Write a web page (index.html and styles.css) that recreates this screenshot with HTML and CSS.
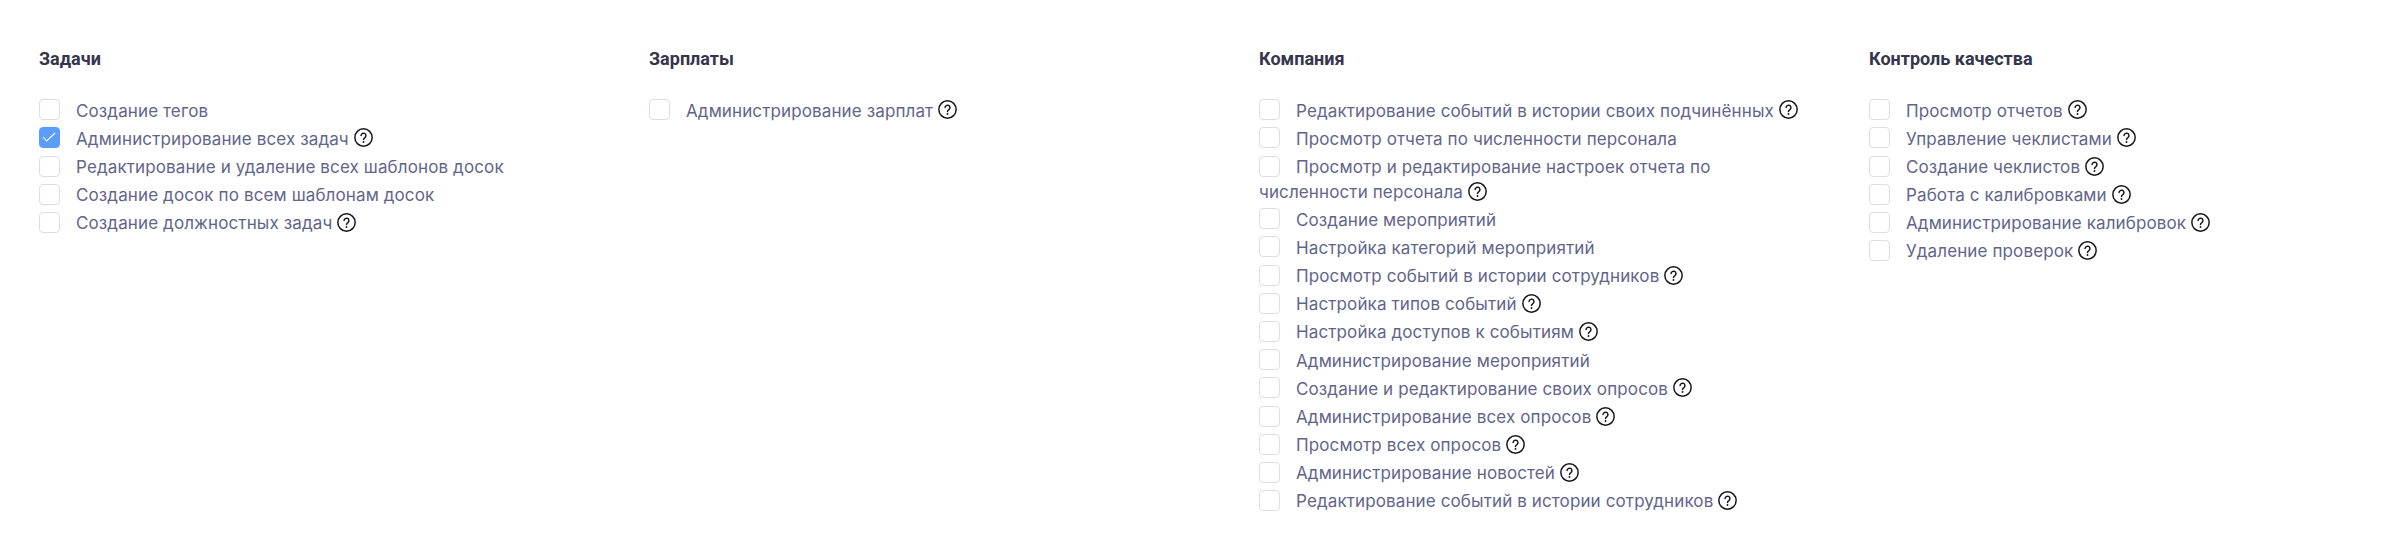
FILE: index.html
```html
<!DOCTYPE html>
<html lang="ru">
<head>
  <meta charset="UTF-8">
  <meta name="viewport" content="width=device-width, initial-scale=1.0">
  <title>Права доступа</title>
  <link rel="stylesheet" href="styles.css">
</head>
<body>
  <svg class="sprite" width="0" height="0">
    <symbol id="help" viewBox="0 0 18 18">
      <circle cx="9" cy="9" r="8.2" fill="none" stroke="#15151c" stroke-width="1.4"/>
      <path d="M6.7 7.2a2.3 2.3 0 1 1 3.6 1.9c-.8.5-1.3 1-1.3 1.9" fill="none" stroke="#15151c" stroke-width="1.4" stroke-linecap="round"/>
      <circle cx="9" cy="13.2" r=".9" fill="#15151c"/>
    </symbol>
  </svg>

  <div class="columns">
    <!-- Задачи -->
    <section class="group">
      <h3 class="group-title">Задачи</h3>
      <label class="item"><span class="box"></span><span class="item-text">Создание тегов</span></label>
      <label class="item"><span class="box box-checked"><svg viewBox="0 0 21 21"><path d="M4 10l3.7 4L16 6" fill="none" stroke="#fff" stroke-width="1.1"/></svg></span><span class="item-text">Администрирование всех задач</span><svg class="help"><use href="#help"/></svg></label>
      <label class="item"><span class="box"></span><span class="item-text">Редактирование и удаление всех шаблонов досок</span></label>
      <label class="item"><span class="box"></span><span class="item-text">Создание досок по всем шаблонам досок</span></label>
      <label class="item"><span class="box"></span><span class="item-text">Создание должностных задач</span><svg class="help"><use href="#help"/></svg></label>
    </section>

    <!-- Зарплаты -->
    <section class="group">
      <h3 class="group-title">Зарплаты</h3>
      <label class="item"><span class="box"></span><span class="item-text">Администрирование зарплат</span><svg class="help"><use href="#help"/></svg></label>
    </section>

    <!-- Компания -->
    <section class="group">
      <h3 class="group-title">Компания</h3>
      <label class="item"><span class="box"></span><span class="item-text">Редактирование событий в истории своих подчинённых</span><svg class="help"><use href="#help"/></svg></label>
      <label class="item"><span class="box"></span><span class="item-text">Просмотр отчета по численности персонала</span></label>
      <label class="item"><span class="box"></span><span class="item-text">Просмотр и редактирование настроек отчета по численности персонала</span><svg class="help"><use href="#help"/></svg></label>
      <label class="item"><span class="box"></span><span class="item-text">Создание мероприятий</span></label>
      <label class="item"><span class="box"></span><span class="item-text">Настройка категорий мероприятий</span></label>
      <label class="item"><span class="box"></span><span class="item-text">Просмотр событий в истории сотрудников</span><svg class="help"><use href="#help"/></svg></label>
      <label class="item"><span class="box"></span><span class="item-text">Настройка типов событий</span><svg class="help"><use href="#help"/></svg></label>
      <label class="item"><span class="box"></span><span class="item-text">Настройка доступов к событиям</span><svg class="help"><use href="#help"/></svg></label>
      <label class="item"><span class="box"></span><span class="item-text">Администрирование мероприятий</span></label>
      <label class="item"><span class="box"></span><span class="item-text">Создание и редактирование своих опросов</span><svg class="help"><use href="#help"/></svg></label>
      <label class="item"><span class="box"></span><span class="item-text">Администрирование всех опросов</span><svg class="help"><use href="#help"/></svg></label>
      <label class="item"><span class="box"></span><span class="item-text">Просмотр всех опросов</span><svg class="help"><use href="#help"/></svg></label>
      <label class="item"><span class="box"></span><span class="item-text">Администрирование новостей</span><svg class="help"><use href="#help"/></svg></label>
      <label class="item"><span class="box"></span><span class="item-text">Редактирование событий в истории сотрудников</span><svg class="help"><use href="#help"/></svg></label>
    </section>

    <!-- Контроль качества -->
    <section class="group">
      <h3 class="group-title">Контроль качества</h3>
      <label class="item"><span class="box"></span><span class="item-text">Просмотр отчетов</span><svg class="help"><use href="#help"/></svg></label>
      <label class="item"><span class="box"></span><span class="item-text">Управление чеклистами</span><svg class="help"><use href="#help"/></svg></label>
      <label class="item"><span class="box"></span><span class="item-text">Создание чеклистов</span><svg class="help"><use href="#help"/></svg></label>
      <label class="item"><span class="box"></span><span class="item-text">Работа с калибровками</span><svg class="help"><use href="#help"/></svg></label>
      <label class="item"><span class="box"></span><span class="item-text">Администрирование калибровок</span><svg class="help"><use href="#help"/></svg></label>
      <label class="item"><span class="box"></span><span class="item-text">Удаление проверок</span><svg class="help"><use href="#help"/></svg></label>
    </section>
  </div>
</body>
</html>
```

FILE: styles.css
```css
body {
  margin: 0;
  background-color: #fff;
  font-family: Inter, "Noto Sans", sans-serif;
}

.sprite {
  position: absolute;
}

.columns {
  display: grid;
  grid-template-columns: repeat(4, 610px);
  padding: 49px 0 0 39px;
}

.group-title {
  margin: 0 0 26.5px;
  height: 20px;
  font-family: Roboto, sans-serif;
  font-size: 18px;
  line-height: 20px;
  font-weight: 700;
  color: #35354c;
}

.item {
  display: block;
  width: 550px;
  font-size: 17px;
  line-height: 24.5px;
  letter-spacing: 0.12px;
  color: #62658a;
}

/* margins stretch the first line of a row to 28px, wrapped lines stay tighter */
.box {
  display: inline-block;
  width: 21px;
  height: 21px;
  margin: 3.65px 16px 3.55px 0;
  box-sizing: border-box;
  border: 1px solid #dcdde9;
  border-radius: 4px;
  vertical-align: -7.55px;
}

.box svg {
  display: block;
  width: 21px;
  height: 21px;
  margin: -1px;
}

.box-checked {
  border-color: #5b9dfb;
  background-color: #5b9dfb;
}

.help {
  width: 19px;
  height: 19px;
  margin-left: 5px;
  vertical-align: -3px;
}
```
